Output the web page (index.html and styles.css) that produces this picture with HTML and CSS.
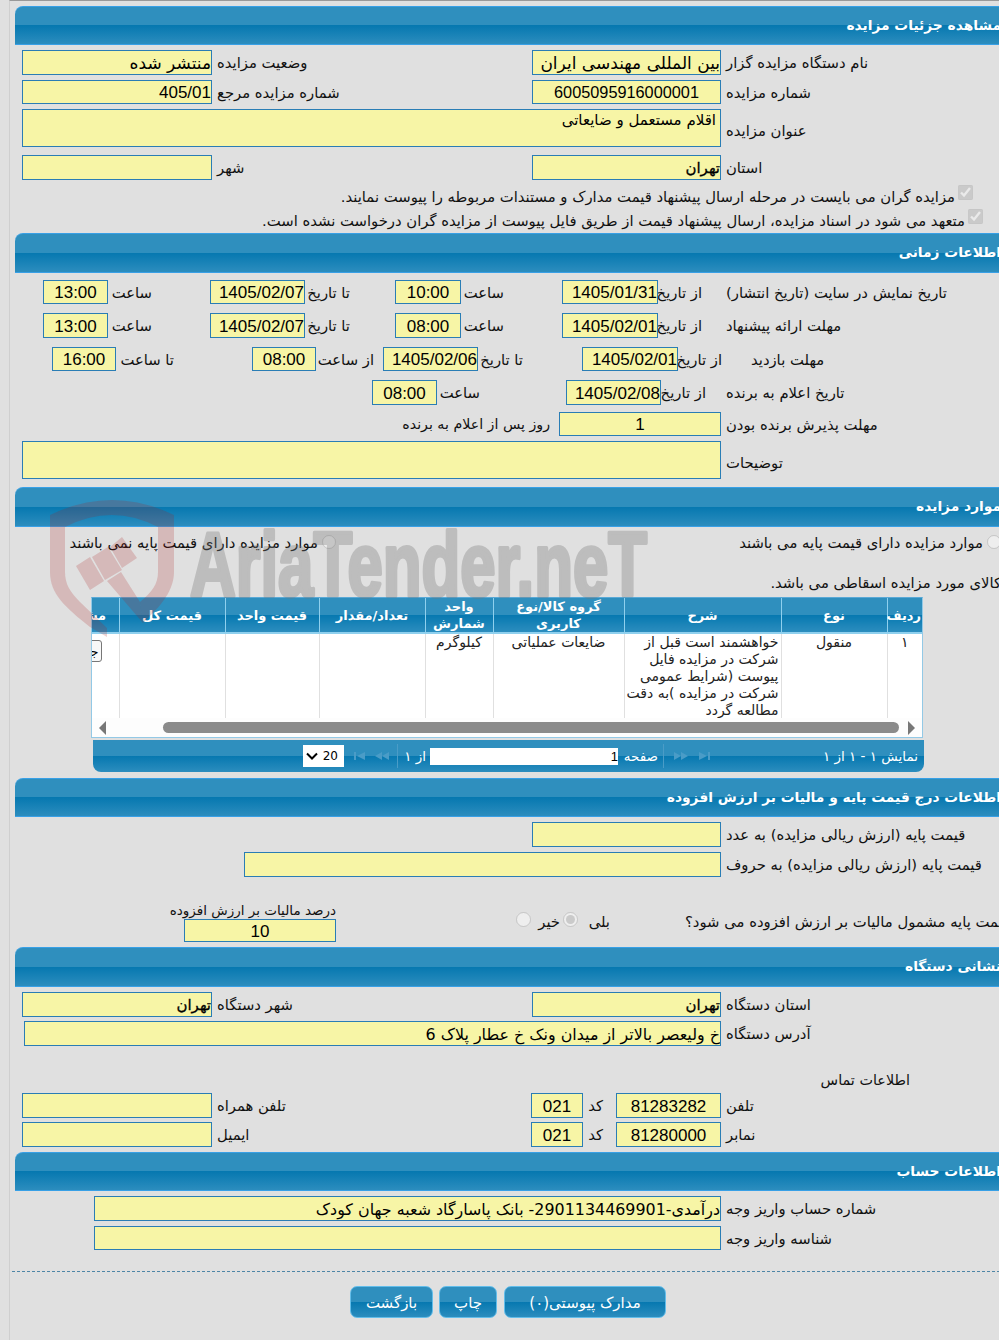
FILE: index.html
```html
<!DOCTYPE html>
<html lang="fa">
<head>
<meta charset="utf-8">
<title>مشاهده جزئیات مزایده</title>
<link rel="stylesheet" href="styles.css">
</head>
<body>
<div class="page">

<h2 class="head h39">مشاهده جزئیات مزایده</h2>
<div class="row two m5 h25"><div class="lab">نام دستگاه مزایده گزار</div><div class="f big17">بین المللی مهندسی ایران</div><div class="lab">وضعیت مزایده</div><div class="f big17">منتشر شده</div></div>
<div class="row two m5 h24"><div class="lab">شماره مزایده</div><div class="f c">6005095916000001</div><div class="lab">شماره مزایده مرجع</div><div class="f d">405/01</div></div>
<div class="row wide m5 h38"><div class="lab low">عنوان مزایده</div><div class="f area">اقلام مستعمل و ضایعاتی</div></div>
<div class="row two m8 h25"><div class="lab">استان</div><div class="f big15">تهران</div><div class="lab">شهر</div><div class="f"></div></div>
<div class="check m4 p42"><input type="checkbox" checked disabled><span>مزایده گران می بایست در مرحله ارسال پیشنهاد قیمت مدارک و مستندات مربوطه را پیوست نمایند.</span></div>
<div class="check p32"><input type="checkbox" checked disabled><span>متعهد می شود در اسناد مزایده، ارسال پیشنهاد قیمت از طریق فایل پیوست از مزایده گران درخواست نشده است.</span></div>

<h2 class="head h40 m1">اطلاعات زمانی</h2>
<div class="row t1 m7 h24"><div class="lab">تاریخ نمایش در سایت (تاریخ انتشار)</div><div class="pr24">از تاریخ</div><div class="f d">1405/01/31</div><div class="pr58">ساعت</div><div class="f c d">10:00</div><div class="pr45">تا تاریخ</div><div class="f d">1405/02/07</div><div class="pr58">ساعت</div><div class="f c d">13:00</div></div>
<div class="row t1 m9 h25"><div class="lab">مهلت ارائه پیشنهاد</div><div class="pr24">از تاریخ</div><div class="f d">1405/02/01</div><div class="pr58">ساعت</div><div class="f c d">08:00</div><div class="pr45">تا تاریخ</div><div class="f d">1405/02/07</div><div class="pr58">ساعت</div><div class="f c d">13:00</div></div>
<div class="row t3 m9 h24"><div class="lab pl25">مهلت بازدید</div><div class="pr4">از تاریخ</div><div class="f d">1405/02/01</div><div class="pr59">تا تاریخ</div><div class="f d">1405/02/06</div><div class="pr9">از ساعت</div><div class="f c d">08:00</div><div class="pr78">تا ساعت</div><div class="f c d">16:00</div></div>
<div class="row t4 m9 h25"><div class="lab">تاریخ اعلام به برنده</div><div class="pr20">از تاریخ</div><div class="f d">1405/02/08</div><div class="pr86">ساعت</div><div class="f c d">08:00</div></div>
<div class="row t5 m7 h24"><div class="lab">مهلت پذیرش برنده بودن</div><div class="f c d">1</div><div class="pr9 small">روز پس از اعلام به برنده</div></div>
<div class="row wide m5 h38"><div class="lab low">توضیحات</div><div class="f area"></div></div>

<h2 class="head h40 m8">موارد مزایده</h2>
<div class="radios m6">
  <div class="radio-a"><input type="radio" disabled><span>موارد مزایده دارای قیمت پایه می باشند</span></div>
  <div class="radio-b"><input type="radio" disabled><span>موارد مزایده دارای قیمت پایه نمی باشند</span></div>
</div>
<div class="note">کالای مورد مزایده اسقاطی می باشد.</div>

<div class="grid">
  <div class="clip">
    <table>
      <colgroup><col class="k35"><col class="k106"><col class="k157"><col class="k131"><col class="k68"><col class="k106"><col class="k94"><col class="k106"><col class="k76"></colgroup>
      <thead><tr><th>ردیف</th><th>نوع</th><th>شرح</th><th>گروه کالا/نوع کاربری</th><th>واحد شمارش</th><th>تعداد/مقدار</th><th>قیمت واحد</th><th>قیمت کل</th><th>مشاهده</th></tr></thead>
      <tbody><tr><td>۱</td><td>منقول</td><td class="desc">خواهشمند است قبل از شرکت در مزایده فایل پیوست (شرایط عمومی شرکت در مزایده )به دقت مطالعه گردد</td><td>ضایعات عملیاتی</td><td>کیلوگرم</td><td></td><td></td><td></td><td><button class="mini" type="button">جزئیات</button></td></tr></tbody>
    </table>
  </div>
  <div class="sbar"><i class="arr-r"></i><div class="thumb"></div><i class="arr-l"></i></div>
</div>
<div class="pager">
  <div class="ptext">نمایش ۱ - ۱ از ۱</div>
  <svg class="pi12" viewBox="0 0 12 10"><path d="M0 1l8 4-8 4zM9 1h2v8H9z"/></svg>
  <svg class="pi14" viewBox="0 0 14 10"><path d="M0 1l7 4-7 4zM7 1l7 4-7 4z"/></svg>
  <span class="sep"></span>
  <span class="pword">صفحه</span>
  <div class="pinput">1</div>
  <span class="pof">از ۱</span>
  <span class="sep"></span>
  <svg class="pi14" viewBox="0 0 14 10"><path d="M14 1L7 5l7 4zM7 1L0 5l7 4z"/></svg>
  <svg class="pi12" viewBox="0 0 12 10"><path d="M12 1L4 5l8 4zM1 1h2v8H1z"/></svg>
  <div class="psel"><span>20</span><svg viewBox="0 0 12 8"><path d="M1 1.5l5 5 5-5" fill="none" stroke="#000" stroke-width="2"/></svg></div>
</div>

<h2 class="head h39 m6">اطلاعات درج قیمت پایه و مالیات بر ارزش افزوده</h2>
<div class="row two m5 h25"><div class="lab">قیمت پایه (ارزش ریالی مزایده) به عدد</div><div class="f"></div></div>
<div class="row price m5 h25"><div class="lab">قیمت پایه (ارزش ریالی مزایده) به حروف</div><div class="f"></div></div>
<div class="tax">
  <div class="tax-q">قیمت پایه مشمول مالیات بر ارزش افزوده می شود؟</div>
  <div class="tax-r"><span class="w25">بلی</span><input type="radio" checked disabled><span class="w21">خیر</span><input type="radio" disabled></div>
  <div class="tax-f"><div class="tax-l">درصد مالیات بر ارزش افزوده</div><div class="f c d h23">10</div></div>
</div>

<h2 class="head h40 m5">نشانی دستگاه</h2>
<div class="row two m5 h25"><div class="lab">استان دستگاه</div><div class="f big15">تهران</div><div class="lab">شهر دستگاه</div><div class="f big15">تهران</div></div>
<div class="row addr m4 h25"><div class="lab">آدرس دستگاه</div><div class="f big">خ ولیعصر بالاتر از میدان ونک خ عطار پلاک 6</div></div>
<div class="contact">اطلاعات تماس</div>
<div class="row tel m4 h25"><div class="lab">تلفن</div><div class="f c d">81283282</div><div class="code">کد</div><div class="f c d">021</div><div class="lab">تلفن همراه</div><div class="f"></div></div>
<div class="row tel m4 h25"><div class="lab">نمابر</div><div class="f c d">81280000</div><div class="code">کد</div><div class="f c d">021</div><div class="lab">ایمیل</div><div class="f"></div></div>

<h2 class="head h39 m5">اطلاعات حساب</h2>
<div class="row acc m5 h25"><div class="lab">شماره حساب واریز وجه</div><div class="f big">درآمدی-2901134469901- بانک پاسارگاد شعبه جهان کودک</div></div>
<div class="row acc m5 h24"><div class="lab">شناسه واریز وجه</div><div class="f"></div></div>

<div class="dash"></div>
<div class="actions">
  <button class="btn b162" type="button">مدارک پیوستی(۰)</button>
  <button class="btn b58" type="button">چاپ</button>
  <button class="btn b83" type="button">بازگشت</button>
</div>
</div>

<svg class="mark" viewBox="0 0 610 145" aria-hidden="true">
  <path class="m-red" d="M0 16Q62-14 124 16V73C124 95 105 112 93 124L90 103C102 93 108 85 108 73V28Q62 4 15 28V73C15 85 20 93 30 103L57 129V138L40 128C15 108 0 95 0 73Z"/>
  <path class="m-red" d="M26 67L40 58 54 82 40 91ZM42 58L58 48 72 71 55 81ZM60 48L72 38 87 59 72 69ZM57 82L71 73 90 103 93 124Z"/>
  <text class="m-text" x="140" y="97" textLength="457" lengthAdjust="spacingAndGlyphs">AriaTender.neT</text>
</svg>
</body>
</html>
```

FILE: styles.css
```css
* { box-sizing: border-box; }
html, body { margin: 0; height: 1340px; overflow: hidden; }
body { background: #e0e0e0; position: relative; font-family: "DejaVu Sans", "Noto Sans", sans-serif; font-size: 14.8px; color: #111; }
.page { direction: rtl; width: 1006px; margin-left: 9px; padding: 5px 0 0 5px; border-left: 1px solid #cfcfcf; border-top: 1px solid #999; height: 1340px; }

.head { margin: 0; padding: 0 14px 0 0; font-size: 13.8px; line-height: 37px; font-weight: bold; color: #fff; white-space: nowrap; border-top: 1px solid #38a0e6; border-bottom: 1px solid #38a0e6; border-top-left-radius: 8px; background: linear-gradient(#2f8fbe 0, #2f8fbe 50%, #0678b0 50%, #2c8dbe 100%); }
.h39 { height: 39px; }
.h40 { height: 40px; }
.m1 { margin-top: 1px; }
.m4 { margin-top: 4px; }
.m5 { margin-top: 5px; }
.m6 { margin-top: 6px; }
.m7 { margin-top: 7px; }
.m8 { margin-top: 8px; }
.m9 { margin-top: 9px; }
.h23 { height: 23px; }
.h24 { height: 24px; }
.h25 { height: 25px; }
.h38 { height: 38px; }

.row { display: grid; align-items: stretch; white-space: nowrap; }
.row > div { display: flex; align-items: center; }
.two { grid-template-columns: 294px 189px 320px 190px; }
.wide { grid-template-columns: 294px 699px; }
.price { grid-template-columns: 294px 477px; }
.addr { grid-template-columns: 294px 697px; }
.acc { grid-template-columns: 294px 627px; }
.t1 { grid-template-columns: 289px 68px 96px 101px 66px 90px 95px 102px 65px; }
.t3 { grid-template-columns: 289px 48px 96px 104px 95px 67px 64px 136px 64px; }
.t4 { grid-template-columns: 289px 65px 95px 129px 65px; }
.t5 { grid-template-columns: 294px 162px 300px; }
.tel { grid-template-columns: 294px 105px 33px 52px 319px 190px; }

.row > .lab { justify-content: flex-end; padding-left: 5px; }
.t1 > .lab, .t3 > .lab, .t4 > .lab { padding-left: 0; }
.row > .pl25 { padding-left: 25px; }
.row > .low { padding-top: 4px; }
.small { font-size: 14.2px; }
.pr4 { padding-right: 4px; }
.pr9 { padding-right: 9px; }
.pr20 { padding-right: 20px; }
.pr24 { padding-right: 24px; }
.pr45 { padding-right: 45px; }
.pr58 { padding-right: 58px; }
.pr59 { padding-right: 59px; }
.pr78 { padding-right: 78px; }
.pr86 { padding-right: 86px; }
.code { padding-right: 13px; }

.f { background: #f7f5a6; border: 1px solid #2a7db5; font-family: "Liberation Sans", "DejaVu Sans", sans-serif; font-size: 16.3px; color: #000; overflow: hidden; white-space: nowrap; }
.row > .f { justify-content: flex-start; }
.f.d { font-size: 17px; padding-top: 2px; }
.row > .c, .c { justify-content: center; text-align: center; }
.big { font-family: "DejaVu Sans", sans-serif; font-size: 15.9px; padding-top: 2px; }
.big17 { font-family: "DejaVu Sans", sans-serif; font-size: 17px; }
.big15 { font-family: "DejaVu Sans", sans-serif; font-size: 15px; -webkit-text-stroke: 0.3px #000; }
.row > .area { align-items: flex-start; font-family: "DejaVu Sans", sans-serif; font-size: 15px; padding: 1px 4px; }

.check { height: 24px; display: flex; align-items: center; white-space: nowrap; }
.p42 { padding-right: 42px; }
.p32 { padding-right: 32px; }
.check input { width: 15px; height: 15px; margin: -7px 0 0 3px; }

.radios { height: 18px; display: flex; white-space: nowrap; align-items: center; }
.radios input { width: 14px; height: 14px; margin: 0 0 0 4px; flex: none; }
.radio-a { flex: none; width: 264px; margin-right: 14px; display: flex; align-items: center; }
.radio-b { margin-right: 401px; display: flex; align-items: center; }
.note { height: 18px; line-height: 18px; margin-top: 23px; margin-right: 14px; white-space: nowrap; }

.grid { margin: 5px 92px 0 76px; height: 141px; border: 1px solid #93c9e6; border-top-color: #5aa9d6; background: #fff; position: relative; }
.clip { overflow: hidden; height: 120px; }
table { width: 879px; table-layout: fixed; border-collapse: collapse; font-size: 14px; }
.k35 { width: 35px; } .k106 { width: 106px; } .k157 { width: 157px; } .k131 { width: 131px; } .k68 { width: 68px; } .k94 { width: 94px; } .k76 { width: 76px; }
th { height: 35px; padding: 0 1px; font-size: 13px; line-height: 17px; font-weight: bold; color: #fff; border-left: 1px solid #8fd0ee; border-bottom: 2px solid #8fd0ee; background: linear-gradient(#2f8fbe 0, #2f8fbe 50%, #0678b0 50%, #2c8dbe 100%); }
td { height: 85px; padding: 0 2px; line-height: 17px; text-align: center; vertical-align: top; border-left: 1px solid #e0e0e0; border-bottom: 1px solid #e0e0e0; color: #222; }
td.desc { text-align: right; padding: 0 2px 0 0; }
.mini { display: block; width: 60px; height: 22px; margin: 6px 15px 0 0; padding: 0 2px 0 0; text-align: right; border: 1px solid #777; border-radius: 3px; background: #f8f8f8; font: 13px "DejaVu Sans", sans-serif; }

.sbar { height: 19px; display: flex; align-items: center; padding: 0 7px; background: #fdfdfd; }
.thumb { flex: 1; height: 11px; margin: 0 9px 0 57px; background: #8b8b8b; border-radius: 6px; }
.arr-r, .arr-l { width: 0; height: 0; border-top: 7px solid transparent; border-bottom: 7px solid transparent; }
.arr-r { border-left: 7px solid #777; }
.arr-l { border-right: 7px solid #777; }

.pager { margin: 2px 91px 0 78px; height: 32px; display: flex; align-items: center; color: #fff; font-size: 13.5px; white-space: nowrap; border-radius: 0 0 8px 8px; background: linear-gradient(#2f8fbe 0, #2f8fbe 50%, #0678b0 50%, #2c8dbe 100%); }
.ptext { width: 213px; padding-right: 6px; }
.pager svg { fill: #4a9cc7; height: 10px; flex: none; }
.pi12 { width: 12px; margin-left: 11px; }
.pi14 { width: 14px; margin-left: 10px; }
.sep { width: 1px; height: 24px; background: #4a9cc7; margin-left: 5px; }
.pword { width: 40px; }
.pinput { width: 188px; height: 17px; background: #fff; color: #000; font: 13px/17px "Liberation Sans", sans-serif; }
.pof { width: 21px; margin-right: 4px; margin-left: 7px; }
.pof + .sep { margin-left: 8px; }
.psel { width: 41px; height: 22px; background: #fff; color: #000; display: flex; align-items: center; justify-content: space-between; padding: 0 6px 0 3px; font: 12px "DejaVu Sans", sans-serif; }
.pager .psel svg { width: 12px; height: 8px; fill: none; }
.pager .pi12 + .psel { margin-right: -2px; }

.tax { height: 41px; margin-top: 24px; display: flex; align-items: center; padding-left: 169px; white-space: nowrap; }
.tax-q { width: 330px; display: flex; justify-content: flex-end; flex: none; }
.tax-r { display: flex; align-items: center; margin-right: 75px; }
.w25 { width: 25px; flex: none; }
.w21 { width: 21px; flex: none; }
.tax-r input { width: 15px; height: 15px; margin: -4px 7px 0 3px; }
.tax-r input:last-child { margin-left: 0; margin-right: 8px; }
.tax-f { margin-right: auto; width: 152px; }
.tax-l { height: 18px; font-size: 13.5px; line-height: 18px; margin-left: -16px; }
.contact { height: 18px; font-size: 14.4px; line-height: 18px; margin-top: 25px; margin-right: 105px; white-space: nowrap; }

.dash { height: 1px; margin: 21px 0 0 -3px; border-top: 1px dashed #4f86a6; }
.actions { display: flex; gap: 6px; padding-right: 349px; margin-top: 14px; }
.btn { height: 32px; padding: 2px 0 0; border: 1px solid #62bdea; border-radius: 7px; color: #fff; font: 15px "DejaVu Sans", sans-serif; background: linear-gradient(#2f8fbe 0, #2f8fbe 50%, #0678b0 50%, #2c8dbe 100%); }
.b162 { width: 162px; margin-left: 1px; }
.b58 { width: 58px; }
.b83 { width: 83px; }

.mark { position: absolute; left: 50px; top: 499px; width: 610px; height: 145px; pointer-events: none; }
.m-red { fill: rgba(170, 30, 30, 0.2); }
.m-text { font: bold 90px "Liberation Sans Narrow", "Liberation Sans", sans-serif; fill: #777; stroke: #777; stroke-width: 4px; stroke-linejoin: round; opacity: 0.33; }
```
